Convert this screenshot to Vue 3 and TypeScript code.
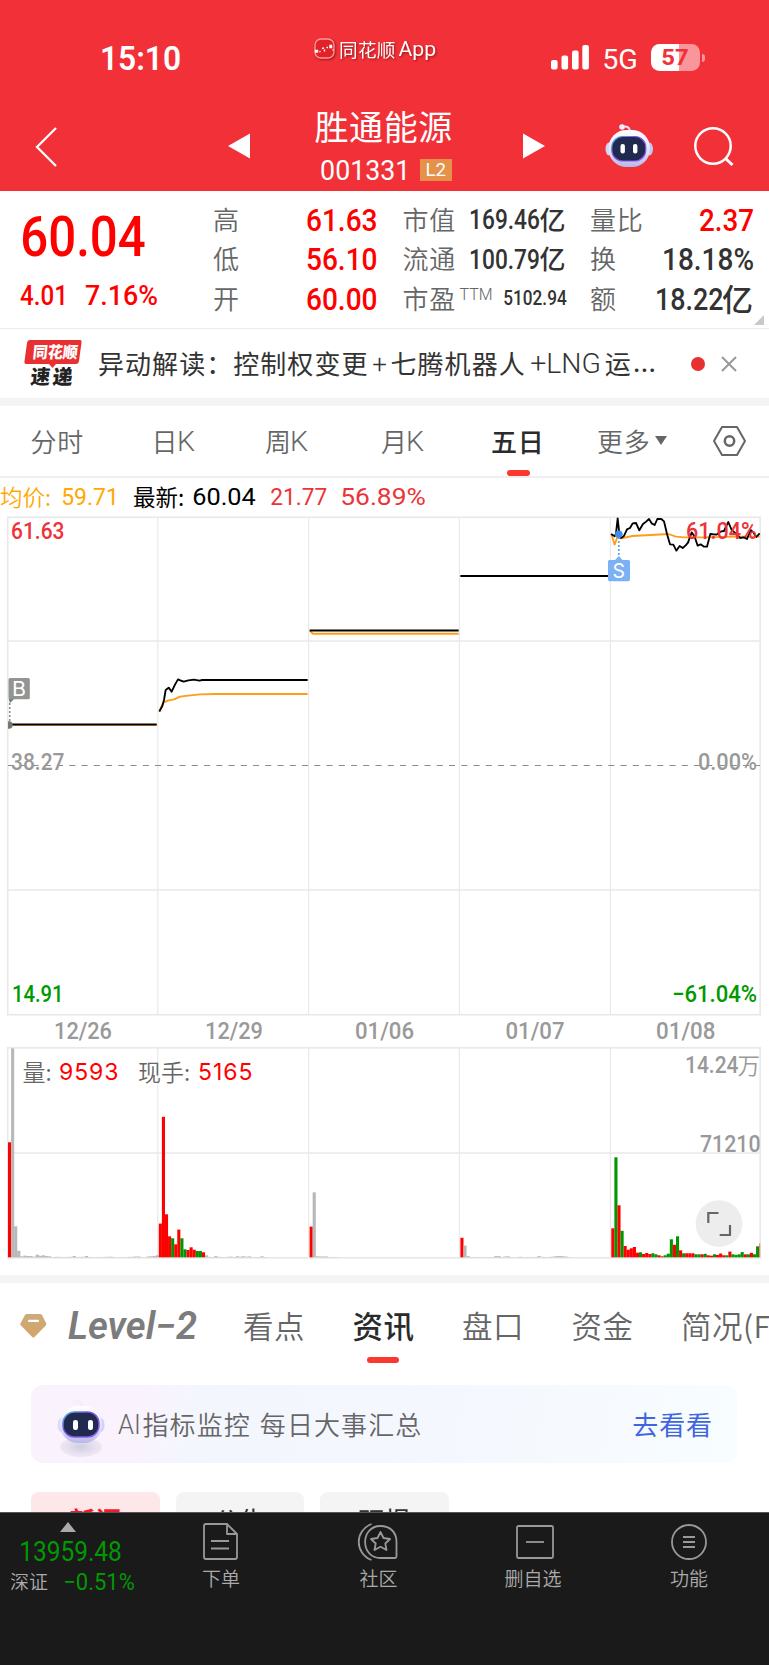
<script setup lang="ts">
import { h, type FunctionalComponent } from 'vue'

/* Text set to an exact ink width and cap height, used for all numerals. */
interface FitProps { t: string; w: number; cap: number; ui?: boolean }
const Fit: FunctionalComponent<FitProps> = (p) => {
  const bearing = p.cap * (p.ui ? 0.07 : 0.045)
  return h('svg', { width: p.w, height: p.cap, class: 'fit' }, [
    h('text', {
      x: -bearing,
      y: p.cap,
      'font-size': p.cap / (p.ui ? 0.727 : 0.711),
      'font-family': p.ui ? 'Inter, "Noto Sans CJK SC", sans-serif' : 'Roboto, "Noto Sans CJK SC", sans-serif',
      textLength: p.w + bearing * 2,
      lengthAdjust: 'spacingAndGlyphs',
      fill: 'currentColor',
    }, p.t),
  ])
}
Fit.props = ['t', 'w', 'cap', 'ui']

const range = [
  { k: '高', v: '61.63' },
  { k: '低', v: '56.10' },
  { k: '开', v: '60.00' },
]

interface Label { t: string; x: number; y: number; w: number; s: number; c: string; b?: number }
const labels: Label[] = [
  { t: '61.63', x: 12, y: 539, w: 51.5, s: 23, c: '#ee3338', b: 500 },
  { t: '61.04%', x: 687, y: 539, w: 69, s: 23, c: '#ee3338', b: 500 },
  { t: '38.27', x: 12, y: 770, w: 51.5, s: 23, c: '#999', b: 500 },
  { t: '0.00%', x: 699, y: 770, w: 57, s: 23, c: '#999', b: 500 },
  { t: '14.91', x: 13, y: 1001.5, w: 49.5, s: 23, c: '#090', b: 500 },
  { t: '−61.04%', x: 673, y: 1001.5, w: 83, s: 23, c: '#090', b: 500 },
  { t: '12/26', x: 55, y: 1038.7, w: 56, s: 23, c: '#999', b: 500 },
  { t: '12/29', x: 206, y: 1038.7, w: 56, s: 23, c: '#999', b: 500 },
  { t: '01/06', x: 356, y: 1038.7, w: 57, s: 23, c: '#999', b: 500 },
  { t: '01/07', x: 506.5, y: 1038.7, w: 57, s: 23, c: '#999', b: 500 },
  { t: '01/08', x: 657, y: 1038.7, w: 57.5, s: 23, c: '#999', b: 500 },
  { t: '14.24', x: 686, y: 1073, w: 51.5, s: 23, c: '#999', b: 500 },
  { t: '71210', x: 701, y: 1151.5, w: 58.5, s: 23, c: '#999', b: 500 },
]

const seps = [157.8, 308.6, 459.4, 610.4]

const R = '#ff0000', G = '#009600', N = '#b8b8b8'
interface Bar { x: number; top: number; c: string }
function day(x0: number, spec: string): Bar[] {
  return spec.split(' ').map((s, i) => ({
    x: x0 + i * 3.08,
    top: 1257.3 - Number(s.slice(1)),
    c: s[0] === 'r' ? R : s[0] === 'g' ? G : N,
  }))
}
const bars: Bar[] = [
  ...day(8, 'r115 n209 n31 n6.5 n1 n1.7 n1.3 n1.3 n.6 n2.6 n1.5 n2 n1.2 n1 n.3 n.4 n.5 n.3 n.3 n.4 n.5 n1.3 n.3 n.4 n.5 n1.3 n.3 n.2 n.2 n.2 n.2 n.4 n.5 n.6 n.2 n.2 n.2 n.2 n.2 n.4 n.5 n.8 n.8 n.2 n.2 n.8 n1 n1.3 n2'),
  ...day(158.8, 'r33.7 r140.5 r43 r21 g19 r13 r27.7 g19 g8 r7.3 r10 r7.6 g6.3 g6.3 r5 n2 n.4 n.3 n1.2 n.5 n.3 n.2 n.4 n.7 n.3 n1 n.6 n1 n.6 n.9 n.2 n.2 n.3 n1 n.3'),
  ...day(309.6, 'r30.7 n65 n1 n.8 n.8 n.8 n.2 n.3 n.2 n.1'),
  ...day(460.4, 'r19.5 n11.7 n1.2 n.3 n.3 n.2 n.2 n.2 n.2 n.2 n.2 n1.2 n1.2 n.3 n.8 n1 n.3 n.2 n.2 n.5 n.2 n.2 n.2 n.2 n.3 n1.2 n.5 n.3 n.3 n.5 n.8 n1.2 n1.2 n1 n.6 n.2'),
  ...day(611.3, 'r29 g100 r52 g26.5 r11.3 r7.6 r9 r10.3 r4.6 g5 r3.3 r4.3 r3.3 g4 g3 r2 r1 g2 g3.6 g18 r12.5 g21 r7 g4 r4 r4 r4 g3 g3 r3 g3.5 r2 r1.6 g3 r2.4 r3.8 r2 g2 r5.7 g3 g2.4 g3 g5.2 r3 g3 r4.5 g3 g11'),
]
</script>

<template>
  <div class="page">
    <header class="head">
      <div class="status">
        <Fit class="clock" t="15:10" :w="79" :cap="24" ui />
        <div class="app">
          <svg width="21" height="21" viewBox="0 0 21 21">
            <rect x="1" y="1" width="19" height="19" rx="6" fill="#e32128" stroke="#ff9a9c" stroke-width="1.3" />
            <path d="M1.500 12.500h2v1.500h-2zM5.500 14l1-.8M8 10.500l2-.5M10.500 11.500v2M12.500 9.500h1.500M16 7.500h1.500v2h-1.500zM18.500 12h1" fill="#fff" stroke="#fff" stroke-width="1.4" />
          </svg>
          <span>同花顺</span><Fit t="App" :w="36.500" :cap="13.800" ui />
        </div>
        <svg class="signal" width="39" height="25" viewBox="0 0 39 25" fill="#fff">
          <rect x="0" y="15" width="6.600" height="9.400" rx="2" />
          <rect x="10.500" y="10.500" width="6.600" height="13.900" rx="2" />
          <rect x="21" y="5.500" width="6.600" height="18.900" rx="2" />
          <rect x="31.300" y="0" width="6.600" height="24.400" rx="2" />
        </svg>
        <Fit class="net" t="5G" :w="34" :cap="19" ui />
        <div class="battery"><div class="level"></div><Fit class="pct" t="57" :w="26" :cap="15.300" ui /><i></i></div>
      </div>

      <nav class="nav">
        <svg class="back" width="24" height="42" viewBox="0 0 24 42"><path d="M21 2L2 21L21 40" fill="none" stroke="#fff" stroke-width="2.300" /></svg>
        <svg class="prev" width="22" height="26" viewBox="0 0 22 26"><path d="M22 .5V25.500L0 13Z" fill="#fff" /></svg>
        <div class="title">
          <h1>胜通能源</h1>
          <div class="code"><Fit t="001331" :w="88.500" :cap="20" ui /><b><Fit t="L2" :w="19.500" :cap="12.500" ui /></b></div>
        </div>
        <svg class="next" width="22" height="26" viewBox="0 0 22 26"><path d="M0 .5V25.500L22 13Z" fill="#fff" /></svg>
        <svg class="bot" width="48" height="44" viewBox="0 0 48 44">
          <defs>
            <linearGradient id="shell" x1="0" y1="0" x2="0" y2="1"><stop offset="0" stop-color="#fff" /><stop offset=".6" stop-color="#dfe0f8" /><stop offset="1" stop-color="#b6b9e8" /></linearGradient>
            <linearGradient id="ring" x1="0" y1="0" x2="1" y2="1"><stop offset="0" stop-color="#50b8e8" /><stop offset=".4" stop-color="#7d4fe0" /><stop offset="1" stop-color="#8f5cf0" /></linearGradient>
          </defs>
          <path d="M17 3Q24 1 25 7" fill="none" stroke="#e4e2f8" stroke-width="2" /><circle cx="17" cy="3" r="2.800" fill="#eeeefc" />
          <ellipse cx="4" cy="25" rx="3.500" ry="6.500" fill="#d3d5f2" /><ellipse cx="44.500" cy="25" rx="3.500" ry="6.500" fill="#c3c8ef" />
          <rect x="3.500" y="6" width="41.500" height="37" rx="18" fill="url(#shell)" />
          <rect x="6.800" y="12.500" width="34" height="24.500" rx="11" fill="#20294e" stroke="url(#ring)" stroke-width="1.200" />
          <rect x="15.500" y="20" width="4.400" height="9.500" rx="2" fill="#fff" /><rect x="28" y="20" width="4.400" height="9.500" rx="2" fill="#fff" />
        </svg>
        <svg class="search" width="42" height="42" viewBox="0 0 42 42" fill="none" stroke="#fff" stroke-width="2.500"><circle cx="20" cy="20" r="17.700" /><path d="M32 32L39.500 39" stroke-width="3" /></svg>
      </nav>
    </header>

    <section class="quote">
      <div class="price">
        <Fit class="big" t="60.04" :w="122" :cap="39.500" />
        <div class="chg"><Fit t="4.01" :w="46" :cap="20.300" /><Fit t="7.16%" :w="71" :cap="20.300" /></div>
      </div>
      <div class="col c1">
        <div v-for="r in range" :key="r.k"><span>{{ r.k }}</span><Fit class="up" :t="r.v" :w="69.500" :cap="22.500" /></div>
      </div>
      <div class="col c2">
        <div><span>市值</span><em><Fit t="169.46" :w="69" :cap="19.600" />亿</em></div>
        <div><span>流通</span><em><Fit t="100.79" :w="69" :cap="19.600" />亿</em></div>
        <div><span>市盈</span><Fit class="ttm" t="TTM" :w="32" :cap="11.500" ui /><Fit class="pe" t="5102.94" :w="62" :cap="14" /></div>
      </div>
      <div class="col c3">
        <div><span>量比</span><Fit class="up" t="2.37" :w="53" :cap="22.500" /></div>
        <div><span>换</span><Fit class="dark" t="18.18%" :w="90" :cap="22.500" /></div>
        <div><span>额</span><em class="lg"><Fit t="18.22" :w="66.500" :cap="22.500" />亿</em></div>
      </div>
      <i class="corner"></i>
    </section>

    <section class="news">
      <svg class="logo" width="60" height="50" viewBox="0 0 60 50">
        <path d="M6 1H56Q58 1 57.500 3.500L55 22Q54.500 25 52 25H32L28.500 29L25 25H2Q0 25 .5 22L3 4Q3.500 1 6 1Z" fill="#e93030" />
        <text x="6" y="19" class="lg-t" fill="#fff" font-size="16" textLength="45" lengthAdjust="spacingAndGlyphs">同花顺</text>
        <g fill="#222" class="lg-t" font-size="20"><text x="6.500" y="45.500" textLength="19.500" lengthAdjust="spacingAndGlyphs">速</text><text x="28.500" y="45.500" textLength="20" lengthAdjust="spacingAndGlyphs">递</text></g>
      </svg>
      <p><span>异动解读：控制权变更</span><Fit t="+" :w="13" :cap="18.500" ui /><span class="b">七腾机器人</span><Fit class="lng" t="+LNG" :w="69" :cap="19" ui /><span class="yun">运</span><span class="dots">…</span></p>
      <i class="dot"></i>
      <svg class="close" width="16" height="16" viewBox="0 0 16 16"><path d="M1 1L15 15M15 1L1 15" stroke="#999" stroke-width="2" /></svg>
    </section>

    <nav class="periods">
      <span class="p1">分时</span>
      <span class="p2">日<Fit t="K" :w="17" :cap="20" ui /></span>
      <span class="p3">周<Fit t="K" :w="17" :cap="20" ui /></span>
      <span class="p4">月<Fit t="K" :w="17" :cap="20" ui /></span>
      <span class="p5 on">五日</span>
      <span class="p6">更多<i class="caret"></i></span>
      <svg class="hex" width="35" height="32" viewBox="0 0 35 32" fill="none" stroke="#666" stroke-width="2"><path d="M10 2H25L33 16L25 30H10L2 16Z" stroke-linejoin="round" /><circle cx="17.500" cy="16" r="4.700" stroke-width="2.500" /></svg>
    </nav>

    <div class="legend">
      <span class="avg">均价:</span><Fit class="avg" t="59.71" :w="56" :cap="17" ui />
      <span class="last">最新:</span><Fit class="lastv" t="60.04" :w="62" :cap="17" ui />
      <Fit class="rise r1" t="21.77" :w="55.500" :cap="17" ui /><Fit class="rise r2" t="56.89%" :w="84" :cap="17" ui />
    </div>

    <svg class="chart" width="769" height="759" viewBox="0 516 769 759">
      <g fill="none" stroke="#e9e9e9" stroke-width="1.700">
        <rect x="7.700" y="517.300" width="752.500" height="497.400" />
        <rect x="7.700" y="1047.800" width="752.500" height="210" />
        <path d="M8 641H760M8 890H760M8 1153H760" />
        <path v-for="s in seps" :key="s" :d="`M${s} 517V1014M${s} 1048V1258`" stroke-width="1.200" />
      </g>
      <path d="M8 765.500H760" stroke="#8c8c8c" stroke-width="1.200" stroke-dasharray="6.100 6.150" />

      <rect v-for="(b, i) in bars" :key="i" :x="b.x" :y="b.top" width="3.100" :height="1257.3 - b.top" :fill="b.c" />
      <rect x="759.200" y="1243.500" width="1" height="14" fill="#f66" />

      <g fill="none" stroke-linejoin="round">
        <g transform="translate(0 400) scale(.33333)" stroke-width="5.500">
          <path d="M34 975H470" stroke="#8a5f14" stroke-width="6" />
          <path d="M34 973H470" stroke="#000" stroke-width="4.500" />
          <path d="M478 932L490 908L505 901L523 898L540 890L565 887L600 883L650 882H923" stroke="#ff9d17" />
          <path d="M478 935L487 918L492 900L497 870L506 863L515 875L525 854L534 838L541 841L551 845L565 841L582 839L598 842L607 840H923" stroke="#000" />
          <path d="M930 692L938 701H1376" stroke="#ff9d17" stroke-width="6" />
          <path d="M929 691.500H1376" stroke="#000" stroke-width="6" />
        </g>
        <g transform="translate(384 400) scale(.33333)" stroke-width="5.500">
          <path d="M229 528H674" stroke="#000" stroke-width="6" />
          <path d="M683 404L692 434L700 412L712 415L745 408L800 405L853 402L876 410L900 412H960L1060 410H1127" stroke="#ff9d17" />
          <path d="M681 402L692 409L696 400L701 355L706 400L711 414L720 408L729 388L738 384L746 370L756 369L766 391L777 372L784 367L795 357L803 370L812 375L820 357L832 357L840 364L849 402L858 433L868 434L877 452L887 438L896 444L905 436L912 428L923 397L932 410L941 437L950 433L960 440H969L979 402L997 404L1012 394L1020 393L1033 366L1043 390L1055 400L1068 414L1080 412L1089 417L1100 390L1108 397L1117 411L1127 400" stroke="#000" />
        </g>
      </g>

      <path d="M9.700 703V722" stroke="#888" stroke-width="1.500" stroke-dasharray="2 2" />
      <path d="M8 721.300H9A3.700 3.700 0 0 1 9 728.700H8ZM8.700 699H14L10 703Z" fill="#777" />
      <rect x="8.500" y="678" width="21.300" height="21.300" rx="1.500" fill="#949494" />
      <text x="12" y="695.700" font-size="20" fill="#fff" textLength="14" lengthAdjust="spacingAndGlyphs" class="mark">B</text>
      <path d="M618.800 537V557" stroke="#5ea2f5" stroke-width="1.700" stroke-dasharray="2 2" />
      <circle cx="618.800" cy="534.300" r="3.800" fill="#3f8df0" />
      <path d="M609.500 560H615L618.800 556L622.500 560H628.500Q630 560 630 561.500V579.500Q630 581.300 628.500 581.300H609.500Q608 581.300 608 579.500V561.500Q608 560 609.500 560Z" fill="#7db1f5" />
      <text x="612.500" y="578" font-size="20" fill="#fff" textLength="12.500" lengthAdjust="spacingAndGlyphs" class="mark">S</text>

      <text v-for="l in labels" :key="l.t + l.x" :x="l.x - 1" :y="l.y" :font-size="l.s" :font-weight="l.b ?? 400" :fill="l.c" :textLength="l.w + 2" lengthAdjust="spacingAndGlyphs" class="num">{{ l.t }}</text>
      <text x="737.500" y="1074" font-size="22.500" fill="#999" class="cjk">万</text>

      <g font-size="23">
        <text x="22.500" y="1080.500" fill="#666" class="cjk">量:</text>
        <text x="59" y="1080" fill="#f00" textLength="59.500" class="ui">9593</text>
        <text x="138" y="1080.500" fill="#666" class="cjk">现手:</text>
        <text x="198" y="1080" fill="#f00" textLength="54.500" class="ui">5165</text>
      </g>

      <circle cx="719" cy="1223.700" r="23.400" fill="#ededed" />
      <path d="M708.300 1223V1213H718.500M730 1225V1235H719.700" fill="none" stroke="#666" stroke-width="2.200" />
    </svg>

    <nav class="info">
      <svg class="gem" width="27" height="24" viewBox="0 0 27 24"><defs><linearGradient id="gold" x1="0" y1="0" x2="0" y2="1"><stop offset="0" stop-color="#cdaa7b" /><stop offset="1" stop-color="#d3a566" /></linearGradient></defs><path d="M5 1Q5.500 0 7 0H20Q21.300 0 22 1L26.300 9.500Q26.500 10.500 26 11.300L14.500 23Q13.300 24 12.200 23L.7 11.300Q0 10.500 .4 9.500Z" fill="url(#gold)" /><path d="M9 6.800H18" stroke="#fff" stroke-width="2.200" stroke-linecap="round" /></svg>
      <svg class="level2" width="129" height="30" viewBox="0 0 129 30"><text x="0" y="28" font-size="38" textLength="129" lengthAdjust="spacingAndGlyphs" fill="#7c7c7c">Level−2</text></svg>
      <span class="t1">看点</span>
      <span class="t2 on">资讯</span>
      <span class="t3">盘口</span>
      <span class="t4">资金</span>
      <span class="t5">简况(F10)</span>
    </nav>

    <section class="feed">
      <div class="ai">
        <svg class="aibot" width="50" height="60" viewBox="0 0 50 60">
          <defs><radialGradient id="shade"><stop offset="0" stop-color="#cfcde0" /><stop offset="1" stop-color="#e9e2f1" stop-opacity=".7" /></radialGradient></defs>
          <ellipse cx="25" cy="49" rx="21" ry="10" fill="url(#shade)" />
          <path d="M19 4Q25 2 27 9" fill="none" stroke="#f2eefa" stroke-width="3" /><circle cx="19" cy="4.500" r="3" fill="#f5f1fc" />
          <ellipse cx="5" cy="27" rx="3.500" ry="7" fill="#dcdcf4" /><ellipse cx="45" cy="27" rx="3.500" ry="7" fill="#cfd2f2" />
          <rect x="4" y="8" width="42" height="37" rx="18" fill="url(#shell)" />
          <rect x="7" y="14" width="36" height="25" rx="11.500" fill="#20294e" stroke="url(#ring)" stroke-width="1.500" />
          <rect x="17" y="22" width="5" height="10" rx="2.200" fill="#fff" /><rect x="32" y="22" width="5" height="10" rx="2.200" fill="#fff" />
        </svg>
        <Fit t="AI" :w="21" :cap="19.500" ui /><span>指标监控 每日大事汇总</span><a>去看看</a>
      </div>
      <div class="pills"><b class="sel">新闻</b><b>公告</b><b>研报</b></div>
    </section>

    <footer class="bar">
      <div class="index">
        <i></i>
        <Fit class="dn" t="13959.48" :w="101" :cap="19.300" />
        <div><span>深证</span><Fit class="dn" t="−0.51%" :w="70" :cap="16.500" /></div>
      </div>
      <div class="item i1">
        <svg width="38" height="38" viewBox="0 0 38 38"><path d="M3.500 1H25L35 11V34Q35 36 33 36H4Q2 36 2 34V3Q2 1 4 1ZM25 1V11H35M9 18H27M9 25.500H27" /></svg><span>下单</span>
      </div>
      <div class="item i2">
        <svg width="42" height="38" viewBox="0 0 42 38"><path d="M13.500 1C-3.500 8 -3.500 30 13.500 37M22.500 3C2 3 2 35 22.500 35H37Q38.500 35 38.500 33.500V19C38.500 9 32 3 22.500 3Z" /><path d="M22.500 9L25.500 15L32 16L27.300 20.500L28.500 27L22.500 23.800L16.500 27L17.700 20.500L13 16L19.500 15Z" /></svg><span>社区</span>
      </div>
      <div class="item i3">
        <svg width="40" height="38" viewBox="0 0 40 38"><rect x="2" y="3" width="36" height="32" rx="1.500" /><path d="M11 19H29" /></svg><span>删自选</span>
      </div>
      <div class="item i4">
        <svg width="38" height="38" viewBox="0 0 38 38"><circle cx="19" cy="19" r="17" /><path d="M13 14H25M13 19H25M13 24H25" /></svg><span>功能</span>
      </div>
    </footer>
  </div>
</template>

<style>
body { margin: 0; background: #fff; }
</style>

<style scoped>
.page { width: 769px; height: 1665px; overflow: hidden; background: #fff; font-family: "Noto Sans CJK SC", sans-serif; color: #333; display: flex; flex-direction: column; }
.page > * { flex: none; box-sizing: border-box; }
svg { display: block; flex: none; overflow: visible; }
span, p, h1, em, b, a { white-space: nowrap; font-style: normal; }
.num { font-family: Roboto, sans-serif; }
.ui, .mark { font-family: Inter, sans-serif; }
.cjk { font-family: "Noto Sans CJK SC", sans-serif; font-weight: 350; }

.head { height: 191px; background: #f23038; color: #fff; }
.status { display: flex; height: 90px; align-items: flex-start; }
.clock { margin: 45.500px 0 0 101px; font-weight: 600; }
.app { margin: 37.500px 0 0 134px; display: flex; align-items: center; width: 124px; filter: drop-shadow(1px 1.500px 1px rgba(100, 0, 0, .6)); }
.app span { font-size: 18.600px; line-height: 22px; margin: 0 3px 0 4px; letter-spacing: .3px; width: 57px; }
.signal { margin: 45px 0 0 113px; }
.net { margin: 49.500px 0 0 13px; font-weight: 450; }
.battery { position: relative; margin: 44px 0 0 13.500px; width: 49px; height: 27px; border-radius: 8.500px; background: linear-gradient(90deg, #fff 58%, #f9969b 58%); display: flex; align-items: center; justify-content: center; color: #f23038; font-weight: 700; }
.battery i { position: absolute; left: 51px; top: 9.500px; width: 3px; height: 8px; border-radius: 0 3px 3px 0; background: #f9969b; }
.nav { display: flex; height: 101px; align-items: flex-start; }
.back { margin: 36px 0 0 35px; }
.prev { margin: 43px 0 0 168.500px; }
.title { margin-left: 66px; width: 137px; }
.title h1 { font-size: 34px; line-height: 40px; letter-spacing: .6px; font-weight: 400; margin: 15.500px 0 0 -1px; }
.code { display: flex; align-items: center; margin: 13px 0 0 5px; }
.code b { width: 32px; height: 22px; margin-left: 10.500px; background: #e5914a; display: flex; align-items: center; justify-content: center; font-weight: 400; }
.next { margin: 43px 0 0 70.500px; }
.bot { margin: 34px 0 0 60px; }
.search { margin: 36px 0 0 40px; }

.quote { position: relative; height: 138px; border-bottom: 1.500px solid #ebebeb; display: flex; color: #333; }
.price { width: 213px; color: #f00; }
.big { margin: 25px 0 0 22px; font-weight: 500; }
.chg { display: flex; gap: 19px; margin: 29px 0 0 20.500px; font-weight: 500; }
.col { padding-top: 8px; }
.col > div { display: flex; height: 39.500px; align-items: center; justify-content: space-between; font-size: 26px; }
.col span { color: #666; letter-spacing: .7px; font-weight: 350; line-height: 36px; }
.col .fit { font-weight: 500; }
.col em { display: flex; align-items: center; font-weight: 500; font-size: 26px; line-height: 36px; }
.col em.lg { font-size: 31px; }
.up { color: #f00; }
.c1 { width: 163.500px; }
.c2 { width: 163px; margin-left: 26px; }
.c2 em .fit { margin-top: 1px; }
.c2 .fit.ttm { color: #666; font-weight: 350; margin: -8px 12px 0 4px; }
.c2 .pe { margin-top: 1px; }
.c3 { width: 163px; margin-left: 24.500px; }
.corner { position: absolute; right: 5px; bottom: 3px; border: 5px solid transparent; border-right-color: #c8c8c8; border-bottom-color: #c8c8c8; }

.news { display: flex; height: 77px; align-items: center; border-bottom: 8px solid #f4f4f4; }
.logo { margin-left: 24px; }
.lg-t { font-weight: 900; font-family: "Noto Sans CJK SC", sans-serif; transform: skewX(-6deg); transform-origin: 0 40px; }
.news p { display: flex; align-items: center; margin: -2px 0 0 14px; font-size: 26px; letter-spacing: 1.050px; width: 586px; font-weight: 400; color: #333; }
.news p .fit { font-weight: 350; letter-spacing: 0; margin: 2px 0 0 4px; }
.news p .b { margin-left: 5px; }
.news p .fit.lng { margin-left: 5px; }
.yun { margin-left: 5px; }
.dots { font-family: Inter, sans-serif; font-size: 27px; margin-left: 1px; }
.dot { width: 14px; height: 14px; border-radius: 50%; background: #e93030; margin-left: 6.500px; }
.close { margin-left: 16px; }

.periods { display: flex; height: 72px; align-items: center; font-size: 26px; color: #666; border-bottom: 2px solid #f0f0f0; }
.periods span { position: relative; display: flex; align-items: center; letter-spacing: .7px; font-weight: 350; box-sizing: border-box; flex: none; margin-top: -2px; }
.periods .fit { margin: 2px 0 0 -.5px; }
.p1 { width: 121px; margin-left: 30.500px; }
.p2 { width: 113.500px; }
.p3 { width: 116px; }
.p4 { width: 110px; }
.p5 { width: 106px; }
.p6 { width: 115px; }
.periods .on, .info .on { font-weight: 500; color: #2b2b2b; }
.periods .on::after { content: ""; position: absolute; left: 15.500px; top: 48px; width: 23.500px; height: 6px; border-radius: 3px; background: #fb382f; }
.caret { margin-left: 5px; border: 6px solid transparent; border-top: 9px solid #666; border-bottom: 0; }
.hex { margin-top: -1px; }

.legend { display: flex; height: 38px; align-items: center; font-size: 22.500px; padding-bottom: 1px; }
.legend span { flex: none; margin-top: -1px; font-weight: 350; }
.legend .avg { color: #ffa800; }
.legend .last, .legend .lastv { color: #000; }
.legend span.avg { width: 62px; }
.legend span.last { width: 59.500px; margin-left: 15px; font-weight: 400; }
.rise { color: #ee3338; }
.r1 { margin-left: 16px; }
.r2 { margin-left: 15px; }

.info { display: flex; height: 102px; border-top: 8px solid #f4f4f4; padding-bottom: 8px; align-items: center; font-size: 30.500px; color: #666; }
.gem { margin-left: 20px; }
.level2 { margin-left: 21px; font-family: Roboto, sans-serif; font-weight: 600; font-style: italic; }
.info span { position: relative; width: 109.500px; flex: none; letter-spacing: .5px; font-weight: 350; margin-top: -3px; }
.info .t1 { margin-left: 46px; }
.info .on::after { content: ""; position: absolute; left: 14.500px; bottom: -16px; width: 32px; height: 6px; border-radius: 3px; background: #fb382f; }

.feed { height: 135px; overflow: hidden; padding: 8px 0 0 31px; }
.ai { height: 78px; width: 706px; border-radius: 12px; background: linear-gradient(100deg, #faf3fe 0, #faf3fe 16%, #f4f6fe 23%, #f4f7fe 55%, #f8fdff 100%); display: flex; align-items: center; font-size: 26px; color: #666; }
.aibot { margin: 7px 12.500px 0 25px; }
.ai .fit { font-weight: 350; }
.ai span { margin: -2px 0 0 3px; letter-spacing: 1.100px; font-weight: 350; word-spacing: 2px; }
.ai a { margin: -2px 24px 0 auto; letter-spacing: .9px; color: #3f66e0; }
.pills { display: flex; gap: 16px; margin-top: 29px; }
.pills b { width: 128.500px; height: 60px; border-radius: 8px; background: #f4f4f4; text-align: center; font-size: 26px; line-height: 56px; font-weight: 400; color: #333; }
.pills .sel { background: #fde7e9; color: #f01c2c; font-weight: 700; }

.bar { height: 153px; background: #1a1a1a; border-top: 1px solid #555; display: flex; color: #aaa; }
.index { width: 170px; }
.index i { display: block; width: 0; margin: 9px 0 0 60px; border: 8.500px solid transparent; border-bottom: 10px solid #aaa; border-top: 0; }
.index > .fit { margin: 9.500px 0 0 20px; }
.dn { color: #090; }
.index > div { display: flex; align-items: center; margin: 7.500px 0 0 10px; font-size: 19px; line-height: 26px; font-weight: 350; }
.index > div .fit { margin: 0 0 0 15.500px; font-weight: 400; }
.item { display: flex; flex-direction: column; align-items: center; padding-top: 9.500px; font-size: 19px; }
.item svg { fill: none; stroke: #999; stroke-width: 1.800; stroke-linejoin: round; }
.item span { margin-top: 3px; line-height: 28px; font-weight: 350; }
.i1 { width: 100px; margin-left: 1px; }
.i2 { width: 100px; margin-left: 57.500px; }
.i3 { width: 100px; margin-left: 56.500px; }
.i3 span { margin-left: -4px; }
.i4 { width: 100px; margin-left: 54px; }
</style>
